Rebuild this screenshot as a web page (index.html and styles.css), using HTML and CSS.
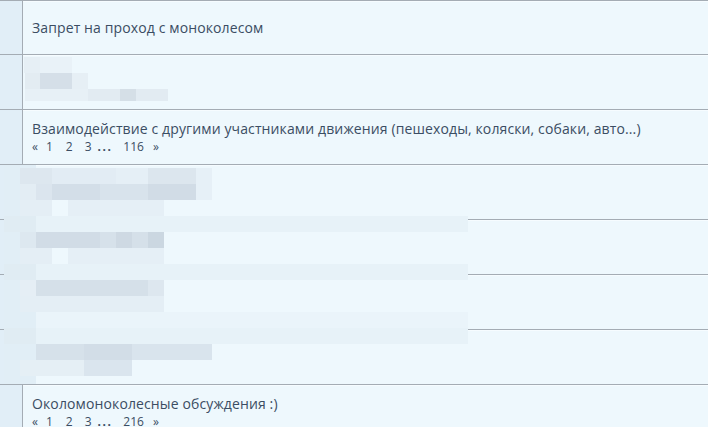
FILE: index.html
```html
<!DOCTYPE html>
<html lang="ru">
<head>
<meta charset="utf-8">
<link rel="stylesheet" href="styles.css">
</head>
<body>
<div class="list">
  <div class="row row-first">
    <div class="side"></div>
    <div class="main"><a class="title">Запрет на проход с моноколесом</a></div>
  </div>
  <div class="row blurred-row">
    <div class="side"></div>
    <div class="main"></div>
    <div class="mosaic">
      <i style="left:24px;top:2px;width:16px;height:16px;background:#e6eff5"></i>
      <i style="left:40px;top:2px;width:32px;height:16px;background:#e9f2f8"></i>
      <i style="left:25px;top:18px;width:15px;height:16px;background:#e3ecf2"></i>
      <i style="left:40px;top:18px;width:32px;height:16px;background:#d5dfe8"></i>
      <i style="left:72px;top:18px;width:16px;height:16px;background:#e6eff5"></i>
      <i style="left:25px;top:34px;width:63px;height:12px;background:#e7f0f6"></i>
      <i style="left:88px;top:34px;width:32px;height:12px;background:#e2ebf2"></i>
      <i style="left:120px;top:34px;width:16px;height:12px;background:#d5dfe7"></i>
      <i style="left:136px;top:34px;width:32px;height:12px;background:#e2ebf2"></i>
    </div>
  </div>
  <div class="row">
    <div class="side"></div>
    <div class="main">
      <a class="title">Взаимодействие с другими участниками движения (пешеходы, коляски, собаки, авто...)</a>
      <div class="pages"><span class="prev">«</span><span class="p1">1</span><span class="p2">2</span><span class="p3">3</span><b>...</b><span class="last">116</span><span>»</span></div>
    </div>
  </div>
  <div class="blur-group">
    <div class="row"><div class="side"></div><div class="main"></div></div>
    <div class="row"><div class="side"></div><div class="main"></div></div>
    <div class="row"><div class="side"></div><div class="main"></div></div>
    <div class="row"><div class="side"></div><div class="main"></div></div>
    <div class="mosaic">
      <i style="left:4px;top:1px;width:32px;height:219px;background:#e1eef6"></i>
      <i style="left:20px;top:4px;width:32px;height:16px;background:#dde7ef"></i>
      <i style="left:52px;top:4px;width:64px;height:16px;background:#e2ecf4"></i>
      <i style="left:116px;top:4px;width:32px;height:16px;background:#e5eff6"></i>
      <i style="left:148px;top:4px;width:48px;height:16px;background:#dce6ee"></i>
      <i style="left:196px;top:4px;width:16px;height:16px;background:#e6f0f7"></i>
      <i style="left:20px;top:20px;width:16px;height:16px;background:#e3edf4"></i>
      <i style="left:36px;top:20px;width:16px;height:16px;background:#dbe5ee"></i>
      <i style="left:52px;top:20px;width:48px;height:16px;background:#d3dee8"></i>
      <i style="left:100px;top:20px;width:48px;height:16px;background:#d8e3ec"></i>
      <i style="left:148px;top:20px;width:48px;height:16px;background:#d1dce6"></i>
      <i style="left:196px;top:20px;width:16px;height:16px;background:#e6f0f7"></i>
      <i style="left:20px;top:36px;width:32px;height:16px;background:#e4eef5"></i>
      <i style="left:68px;top:36px;width:96px;height:16px;background:#e5eff6"></i>
      <i style="left:4px;top:52px;width:464px;height:16px;background:#e7f2f8"></i>
      <i style="left:4px;top:52px;width:32px;height:16px;background:#e0ecf3"></i>
      <i style="left:20px;top:68px;width:16px;height:16px;background:#dde8f0"></i>
      <i style="left:36px;top:68px;width:64px;height:16px;background:#d1dce6"></i>
      <i style="left:100px;top:68px;width:16px;height:16px;background:#d6e1ea"></i>
      <i style="left:116px;top:68px;width:16px;height:16px;background:#ced9e3"></i>
      <i style="left:132px;top:68px;width:16px;height:16px;background:#d5e0e9"></i>
      <i style="left:148px;top:68px;width:16px;height:16px;background:#cbd7e1"></i>
      <i style="left:20px;top:84px;width:32px;height:16px;background:#e4eef5"></i>
      <i style="left:68px;top:84px;width:96px;height:16px;background:#e5eff6"></i>
      <i style="left:4px;top:100px;width:464px;height:16px;background:#e7f2f8"></i>
      <i style="left:4px;top:100px;width:32px;height:16px;background:#e0ecf3"></i>
      <i style="left:20px;top:116px;width:16px;height:16px;background:#e5eef5"></i>
      <i style="left:36px;top:116px;width:112px;height:16px;background:#d5e0e9"></i>
      <i style="left:148px;top:116px;width:16px;height:16px;background:#dde7ef"></i>
      <i style="left:20px;top:132px;width:144px;height:16px;background:#e4eef5"></i>
      <i style="left:36px;top:148px;width:432px;height:16px;background:#eaf4fa"></i>
      <i style="left:4px;top:164px;width:464px;height:16px;background:#e7f2f8"></i>
      <i style="left:4px;top:164px;width:32px;height:16px;background:#e0ecf3"></i>
      <i style="left:36px;top:180px;width:48px;height:16px;background:#d6e1ea"></i>
      <i style="left:84px;top:180px;width:48px;height:16px;background:#d2dde7"></i>
      <i style="left:132px;top:180px;width:80px;height:16px;background:#d9e4ed"></i>
      <i style="left:20px;top:196px;width:64px;height:16px;background:#e5eff5"></i>
      <i style="left:84px;top:196px;width:48px;height:16px;background:#dae5ee"></i>
    </div>
  </div>
  <div class="row">
    <div class="side"></div>
    <div class="main">
      <a class="title">Околомоноколесные обсуждения :)</a>
      <div class="pages"><span class="prev">«</span><span class="p1">1</span><span class="p2">2</span><span class="p3">3</span><b>...</b><span class="last">216</span><span>»</span></div>
    </div>
  </div>
</div>
</body>
</html>
```

FILE: styles.css
```css
html, body {
  margin: 0;
  padding: 0;
  background: #eef8fd;
  font-family: "Open Sans", "Noto Sans", sans-serif;
  color: #3b4d63;
  overflow: hidden;
}

.list {
  display: flex;
  flex-direction: column;
}

.row {
  position: relative;
  display: grid;
  grid-template-columns: 23px 1fr;
  height: 55px;
  box-sizing: border-box;
  border-top: 1px solid #a4acb4;
}

.row-first {
  height: 54px;
}

.side {
  background: #e1eef7;
  border-right: 1px solid #a4acb4;
}

.main {
  background: #eef8fd;
  box-shadow: inset 0 4px 0 -3px #f6fcff;
  padding-left: 9px;
  padding-top: 1px;
  display: flex;
  flex-direction: column;
  justify-content: center;
}

.title {
  font-size: 14px;
  line-height: 18px;
  letter-spacing: 0.12px;
  color: #3b4d63;
  white-space: nowrap;
}

.pages {
  font-size: 12px;
  line-height: 18px;
  display: flex;
  align-items: baseline;
}

.pages .prev { margin-right: 8px; }
.pages .p1 { margin-right: 13px; }
.pages .p2 { margin-right: 12px; }
.pages .p3 { margin-right: 6px; }
.pages .last { margin-right: 9px; }

.pages b {
  font-weight: bold;
  letter-spacing: 1.5px;
  margin-right: 11px;
}

.blur-group {
  position: relative;
  display: flex;
  flex-direction: column;
}

.mosaic {
  position: absolute;
  left: 0;
  top: 0;
  width: 468px;
  height: 100%;
  pointer-events: none;
}

.mosaic i {
  position: absolute;
  display: block;
}
```
